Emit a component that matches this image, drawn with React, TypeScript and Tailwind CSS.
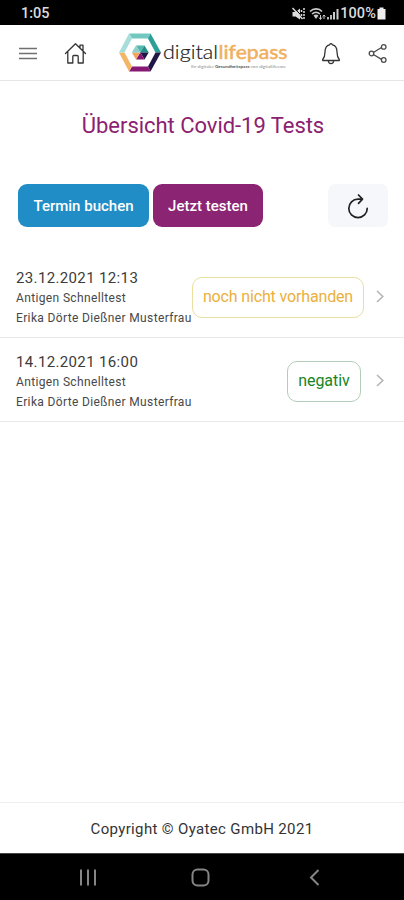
import React from "react";

type Test = {
  date: string;
  kind: string;
  person: string;
  result: string;
  badge: string;
};

const tests: Test[] = [
  {
    date: "23.12.2021 12:13",
    kind: "Antigen Schnelltest",
    person: "Erika Dörte Dießner Musterfrau",
    result: "noch nicht vorhanden",
    badge: "w-[172px] text-[#eab040] border-[#e8dfa0] tracking-[-0.15px]",
  },
  {
    date: "14.12.2021 16:00",
    kind: "Antigen Schnelltest",
    person: "Erika Dörte Dießner Musterfrau",
    result: "negativ",
    badge: "w-[74px] mr-[3px] text-[#17851f] border-[#b3cdb8] tracking-[-0.05px]",
  },
];

const StatusBar = () => (
  <div className="h-[25px] shrink-0 bg-black text-[#dcdcdc] flex items-center justify-between pl-[21px] pr-[18px]">
    <span className="text-[14.500px] font-medium leading-none pt-[3px]">1:05</span>
    <div className="flex items-center pt-[3px]">
      <svg className="-mt-px" width="13" height="14" viewBox="0 0 13 14" fill="none" stroke="#dcdcdc">
        <path d="M0.500 5h3L8 1.500v11L3.500 9.500h-3z" fill="#dcdcdc" stroke="none" />
        <path d="M2 0.500l9 10" stroke="#000" strokeWidth="1" />
        <path d="M0.500 1l10 11" strokeWidth="1.500" />
        <path d="M9.500 3v2M9.500 7v2M12 1v12" strokeWidth="1.500" strokeDasharray="2 1" />
      </svg>
      <svg className="ml-[4px] -mt-px" width="31" height="14" viewBox="0 0 31 14" fill="none" stroke="#cccccc">
        <path d="M1 4.500C4.500 1 10 1 13 4.500M3 7c2.500-2.200 5.500-2.200 8 0" strokeWidth="1.600" />
        <path d="M4.500 8.500Q7 6.500 9.500 8.500L7 12z" fill="#cccccc" stroke="none" />
        <path d="M11.500 8v4M10 10.500l1.500 2 1.500-2M15 12V8M13.700 9.500L15 8l1.500 1.500" />
        <path d="M19 12.500V10M22 12.500V8" strokeWidth="1.800" />
        <path d="M25 12.500V5M28.500 12.500V2" strokeWidth="2" />
      </svg>
      <span className="text-[14.500px] font-medium leading-none tracking-[0.1px]">100%</span>
      <svg className="ml-px -mt-px" width="9" height="13" viewBox="0 0 9 13" fill="#eeeeee">
        <path d="M2.500 0.500h4v1.500H8.500v10.500H0.500V2h2z" />
      </svg>
    </div>
  </div>
);

const Logo = () => (
  <svg width="172" height="42" viewBox="0 0 172 42" fontFamily="Lato, sans-serif">
    <g>
      <path d="M10 1.500H31.500L29 6.500H13z" fill="#72c7bf" />
      <path d="M31.500 1.500L42 20.500H36.500L29 6.500z" fill="#2b9f98" />
      <path d="M42 20.500L31.500 39.500L29 34.500L36.500 20.500z" fill="#201746" />
      <path d="M31.500 39.500H10L13 34.500H29z" fill="#871873" />
      <path d="M10 39.500L0 20.500H5.500L13 34.500z" fill="#f3b566" />
      <path d="M0 20.500L10 1.500L13 6.500L5.500 20.500z" fill="#a8ded9" />
      <path d="M17 13.500h8.500l-4.300 7z" fill="#52b8ae" />
      <path d="M25.500 13.500l4.200 7h-8.500z" fill="#238f89" />
      <path d="M29.700 20.500l-4.200 7-4.300-7z" fill="#201746" />
      <path d="M25.500 27.500H17l4.200-7z" fill="#871873" />
      <path d="M17 27.500l-4.200-7h8.400z" fill="#f3a45c" />
      <path d="M12.800 20.500l4.200-7 4.200 7z" fill="#8fd0ca" />
    </g>
    <text x="44" y="27" fontSize="19.500" fontWeight="300" fill="#202020" stroke="#202020" strokeWidth="0.200" textLength="55" lengthAdjust="spacingAndGlyphs">digital</text>
    <text x="99.500" y="27" fontSize="19.500" fontWeight="400" fill="#f0b060" stroke="#f0b060" strokeWidth="0.500" textLength="69" lengthAdjust="spacingAndGlyphs">lifepass</text>
    <text x="72" y="35.500" fontSize="4" fill="#8a8a8a" textLength="95" lengthAdjust="spacingAndGlyphs">
      Ihr digitaler <tspan fontWeight="700" fill="#555">Gesundheitspass</tspan> von digitallifecare
    </text>
  </svg>
);

const Header = () => (
  <header className="h-[56px] shrink-0 border-b border-[#e6e6e6] flex items-center pl-[19px] pr-[16px]">
    <svg width="18" height="14" viewBox="0 0 18 14" stroke="#707070" strokeWidth="1.600">
      <path d="M0 2.500h18M0 7.500h18M0 12.500h18" />
    </svg>
    <svg className="mt-[2px] ml-[27px]" width="23" height="23" viewBox="0 0 23 23" fill="none" stroke="#343434" strokeWidth="1.300" strokeLinejoin="round" strokeLinecap="round">
      <path d="M1.500 11.500L11.500 1.800L21.500 11.500M16 6V3.200h3v5.600M3.800 9.500V21h5v-6.500q0-1 1-1h3.400q1 0 1 1V21h5V9.500" />
    </svg>
    <div className="ml-[32px] pt-px">
      <Logo />
    </div>
    <svg className="mt-[2px] ml-[30px]" width="20" height="23" viewBox="0 0 20 23" fill="none" stroke="#343434" strokeWidth="1.300" strokeLinejoin="round">
      <path d="M8.500 2.800Q10 0.600 11.500 2.800C15.500 3.600 16 7 16 10c0 4.500 1 6 2.300 7.500v1H1.700v-1C3 16 4 14.500 4 10c0-3 0.500-6.400 4.500-7.200zM7.300 18.700c0.300 3.800 5.100 3.800 5.400 0" />
    </svg>
    <svg className="mt-[2px] ml-[27px]" width="20" height="21" viewBox="0 0 20 21" fill="none" stroke="#4a4a4a" strokeWidth="1.300">
      <path d="M5.800 9.200L13.500 4.500M5.800 11.700l7.700 4.700" />
      <circle cx="3.500" cy="10.500" r="2.300" />
      <circle cx="15.700" cy="3.900" r="2.300" />
      <circle cx="15.700" cy="17" r="2.300" />
    </svg>
  </header>
);

const TestRow = ({ test }: { test: Test }) => (
  <li className="h-[84px] border-b border-[#e8e8e8] flex items-center pl-4 pr-[20px] pt-[3px]">
    <div className="w-[176px] pt-[2px] shrink-0 whitespace-nowrap">
      <p className="text-[15px] leading-[20px] text-[#3c3c3c] tracking-[0.36px]">{test.date}</p>
      <p className="pt-px text-[12px] leading-[19px] text-[#484848] tracking-[0.36px]">{test.kind}</p>
      <p className="pt-px text-[12px] leading-[19px] text-[#484848] tracking-[0.36px]">{test.person}</p>
    </div>
    <div className={`ml-auto h-[41px] shrink-0 border rounded-[10px] flex items-center justify-center text-[16px] whitespace-nowrap ${test.badge}`}>
      {test.result}
    </div>
    <svg className="ml-[12px]" width="8" height="14" viewBox="0 0 8 14" fill="none" stroke="#b5b5b5" strokeWidth="1.600">
      <path d="M1 1L6.800 6.500L1 12" />
    </svg>
  </li>
);

const NavBar = () => (
  <div className="h-[47px] shrink-0 bg-black border-t border-[#444] flex items-center pl-[79px]">
    <svg width="18" height="17" viewBox="0 0 18 17" stroke="#858585" strokeWidth="2">
      <path d="M2 0.500v16M9 0.500v16M16 0.500v16" />
    </svg>
    <svg className="ml-[94px]" width="19" height="19" viewBox="0 0 19 19" fill="none" stroke="#858585" strokeWidth="2">
      <rect x="1.500" y="1.500" width="16" height="16" rx="5" />
    </svg>
    <svg className="ml-[99px]" width="11" height="17" viewBox="0 0 11 17" fill="none" stroke="#858585" strokeWidth="2">
      <path d="M9.500 1L2 8.500L9.500 16" />
    </svg>
  </div>
);

const App = () => {
  return (
    <div className="w-[404px] h-[900px] bg-white flex flex-col overflow-hidden font-['Roboto',sans-serif]">
      <StatusBar />
      <Header />
      <main className="grow">
        <h1 className="pt-[31px] text-center text-[22px] leading-[28px] font-normal text-[#8b2170] tracking-[-0.04px] pl-[2px]">
          Übersicht Covid-19 Tests
        </h1>
        <div className="mt-[44px] flex items-center pl-[18px] pr-[16px]">
          <button className="w-[131px] h-[43px] pt-px rounded-[9px] bg-[#208dc6] text-white text-[15px] font-medium">
            Termin buchen
          </button>
          <button className="ml-[4px] w-[110px] h-[43px] pt-px rounded-[9px] bg-[#8b2473] text-white text-[15px] font-medium">
            Jetzt testen
          </button>
          <button className="ml-auto w-[60px] h-[43px] rounded-[7px] bg-[#f5f7fa] flex items-center justify-center">
            <svg width="22" height="26" viewBox="0 0 22 26" fill="none" stroke="#222" strokeWidth="1.700" strokeLinecap="round" strokeLinejoin="round">
              <path d="M14 6.200H11A9.200 9.200 0 1 0 20.200 15.400M11.500 2l4 4.200l-4 4.200" />
            </svg>
          </button>
        </div>
        <ul className="mt-[27px]">
          {tests.map((test) => (
            <TestRow key={test.date} test={test} />
          ))}
        </ul>
      </main>
      <footer className="h-[51px] shrink-0 border-t border-[#eeeeee] flex items-center justify-center pt-[2px] text-[15px] text-[#333] tracking-[0.35px]">
        Copyright © Oyatec GmbH 2021
      </footer>
      <NavBar />
    </div>
  );
};

export default App;
